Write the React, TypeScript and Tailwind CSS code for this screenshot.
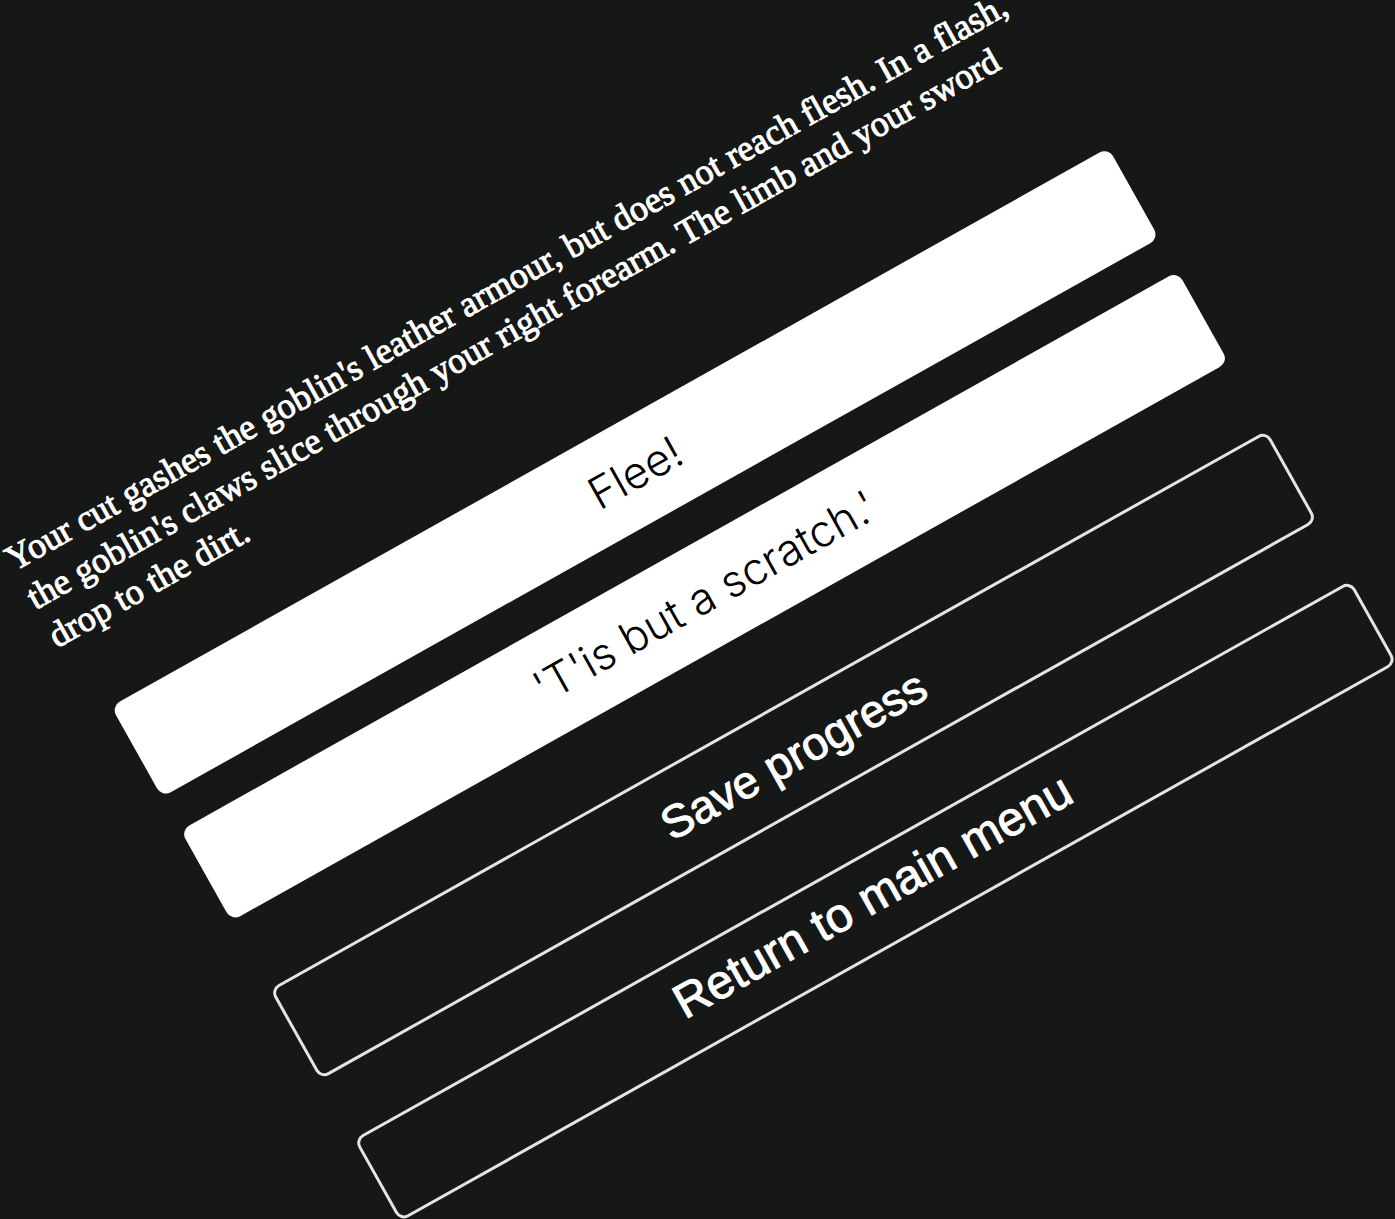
const choices = ["Flee!", "'T'is but a scratch.'"];

export default function App() {
  return (
    <main className="flex min-h-screen items-center overflow-hidden bg-[#161817] pr-[99px] pb-6 pl-[115px] text-white">
      <section className="min-w-0 flex-1 rotate-[-29.27deg]">
        <p className="mb-[67px] font-['Liberation_Serif',serif] text-[36px] leading-[44px] [-webkit-text-stroke:1px_white]">
          Your cut gashes the goblin's leather armour, but does not reach flesh. In a flash, the goblin's claws slice
          through your right forearm. The limb and your sword drop to the dirt.
        </p>
        <div className="mx-[19px] flex flex-col">
          <div className="flex flex-col gap-[38px]">
            {choices.map((choice) => (
              <button
                key={choice}
                type="button"
                className="h-[104px] rounded-[10px] bg-white font-['Inter',sans-serif] text-[44px] font-[350] text-black"
              >
                {choice}
              </button>
            ))}
          </div>
          <button
            type="button"
            className="mt-[78px] h-[104px] rounded-[10px] border-3 border-[#e4e4e4] font-['Liberation_Sans',sans-serif] text-[46px] [-webkit-text-stroke:1px_white]"
          >
            Save progress
          </button>
          <button
            type="button"
            className="mt-[68px] h-[95px] rounded-[10px] border-3 border-[#e4e4e4] pb-3 font-['Liberation_Sans',sans-serif] text-[48px] [-webkit-text-stroke:1px_white]"
          >
            Return to main menu
          </button>
        </div>
      </section>
    </main>
  );
}
